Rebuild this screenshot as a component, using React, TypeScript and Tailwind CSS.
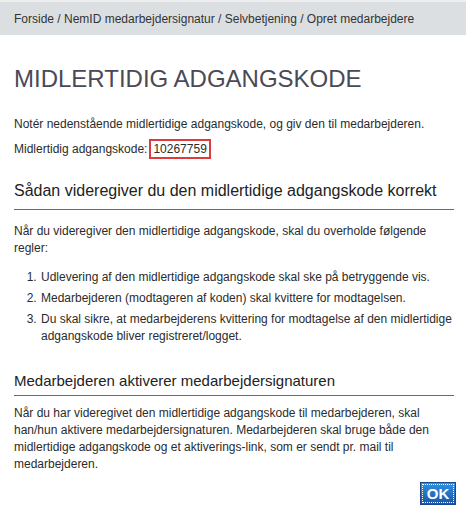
export default function App() {
  return (
    <div className="w-[466px] h-[531px] bg-white font-['Liberation_Sans',Arial,sans-serif] text-[#2b2b2b] overflow-hidden">
      <div className="h-[2px] bg-[#eceef0]" />
      <div className="h-[33px] bg-[#dcdfe2] flex items-center px-[14px] text-[12px] text-[#333]">
        Forside / NemID medarbejdersignatur / Selvbetjening / Opret medarbejdere
      </div>
      <div className="px-[14px]">
        <h1 className="mt-[30px] text-[24px] leading-[28px] text-[#4a4a57]">MIDLERTIDIG ADGANGSKODE</h1>
        <p className="mt-[23px] text-[12px] leading-[16px]">
          Notér nedenstående midlertidige adgangskode, og giv den til medarbejderen.
        </p>
        <p className="mt-[7px] text-[12px] leading-[20px]">
          Midlertidig adgangskode:
          <span className="ml-[2px] inline-block border-2 border-[#e0393e] px-[2px] leading-[16px]">10267759</span>
        </p>
        <h2 className="mt-[21px] text-[16px] leading-[22px] text-[#222] pb-[7px] border-b border-[#6b6b6b] mr-[-2px]">
          Sådan videregiver du den midlertidige adgangskode korrekt
        </h2>
        <p className="mt-[13px] text-[12px] leading-[17px]">
          Når du videregiver den midlertidige adgangskode, skal du overholde følgende regler:
        </p>
        <ol className="mt-[12px] ml-[26px] list-decimal text-[12px] leading-[17px] flex flex-col gap-[4px]">
          <li className="pl-[1px]">Udlevering af den midlertidige adgangskode skal ske på betryggende vis.</li>
          <li className="pl-[1px]">Medarbejderen (modtageren af koden) skal kvittere for modtagelsen.</li>
          <li className="pl-[1px]">Du skal sikre, at medarbejderens kvittering for modtagelse af den midlertidige adgangskode bliver registreret/logget.</li>
        </ol>
        <h2 className="mt-[25px] text-[15px] leading-[22px] text-[#222] pb-[3px] border-b border-[#6b6b6b] mr-[-2px]">
          Medarbejderen aktiverer medarbejdersignaturen
        </h2>
        <p className="mt-[9px] text-[12px] leading-[17px]">
          Når du har videregivet den midlertidige adgangskode til medarbejderen, skal han/hun aktivere medarbejdersignaturen. Medarbejderen skal bruge både den midlertidige adgangskode og et aktiverings-link, som er sendt pr. mail til medarbejderen.
        </p>
        <div className="flex justify-end mt-[9px] mr-[-4px]">
          <button className="w-[36px] h-[23px] bg-gradient-to-b from-[#2f93e0] to-[#1b55a8] text-white font-bold text-[15px] leading-none outline outline-1 outline-dotted outline-white -outline-offset-3 border border-[#1a4a8c]">
            OK
          </button>
        </div>
      </div>
    </div>
  );
}
